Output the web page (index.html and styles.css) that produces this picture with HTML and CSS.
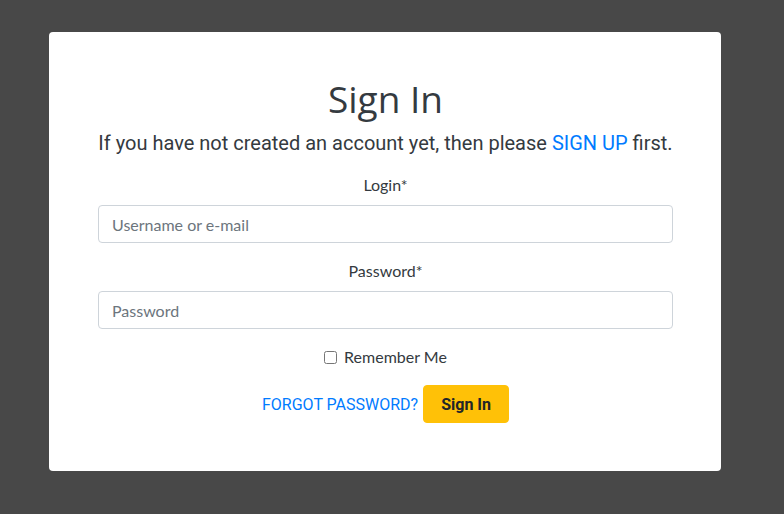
FILE: index.html
```html
<!DOCTYPE html>
<html>
<head>
<meta charset="utf-8">
<link rel="stylesheet" href="styles.css">
</head>
<body>
<div class="page">
  <div class="card">
    <h1 class="title">Sign In</h1>
    <p class="lead">If you have not created an account yet, then please <a class="link" href="#">SIGN UP</a> first.</p>
    <form class="form">
      <label class="label" for="login">Login*</label>
      <input class="input" id="login" type="text" placeholder="Username or e-mail">
      <label class="label" for="pw">Password*</label>
      <input class="input" id="pw" type="password" placeholder="Password">
      <div class="remember">
        <input class="check" id="rem" type="checkbox">
        <label class="remember-label" for="rem">Remember Me</label>
      </div>
      <div class="actions">
        <a class="link forgot" href="#">FORGOT PASSWORD?</a>
        <button class="btn" type="button">Sign In</button>
      </div>
    </form>
  </div>
</div>
</body>
</html>
```
FILE: styles.css
```css
html, body {
  margin: 0;
  padding: 0;
  background: #484848;
  height: 100%;
}
.page {
  padding: 32px 63px 0 49px;
}
.card {
  background: #fff;
  border-radius: 4px;
  height: 439px;
  box-sizing: border-box;
  padding: 43px 48px 0 49px;
  text-align: center;
  color: #343a40;
}
.title {
  margin: 0;
  font-family: "Open Sans", sans-serif;
  font-weight: 400;
  font-size: 37px;
  line-height: 48px;
  color: #343a40;
}
.lead {
  margin: 5px -6px 0 -6px;
  font-family: Roboto, sans-serif;
  font-size: 20px;
  line-height: 30px;
  color: #343a40;
  white-space: nowrap;
}
.link {
  color: #007bff;
  text-decoration: none;
  font-family: Roboto, sans-serif;
}
.form {
  display: flex;
  flex-direction: column;
  margin-top: 15px;
}
.label {
  font-family: Lato, sans-serif;
  font-size: 16px;
  line-height: 24px;
  color: #343a40;
  margin-bottom: 8px;
}
.input {
  height: 38px;
  box-sizing: border-box;
  border: 1px solid #ced4da;
  border-radius: 4px;
  padding: 6px 13px;
  font-family: Lato, sans-serif;
  font-size: 16px;
  color: #495057;
  margin-bottom: 16px;
}
.input::placeholder {
  color: #6c757d;
}
.remember {
  display: flex;
  justify-content: center;
  align-items: center;
  gap: 7px;
  margin-top: 0;
}
.check {
  margin: 0;
  width: 13px;
  height: 13px;
}
.remember-label {
  font-family: Lato, sans-serif;
  font-size: 16px;
  line-height: 24px;
  color: #343a40;
}
.actions {
  display: flex;
  justify-content: center;
  align-items: center;
  gap: 5px;
  margin-top: 16px;
}
.forgot {
  font-size: 16px;
}
.btn {
  height: 38px;
  padding: 0 17px;
  background: #ffc107;
  border: 1px solid #ffc107;
  border-radius: 4px;
  font-family: Roboto, sans-serif;
  font-weight: 700;
  font-size: 16px;
  color: #212529;
}
```
